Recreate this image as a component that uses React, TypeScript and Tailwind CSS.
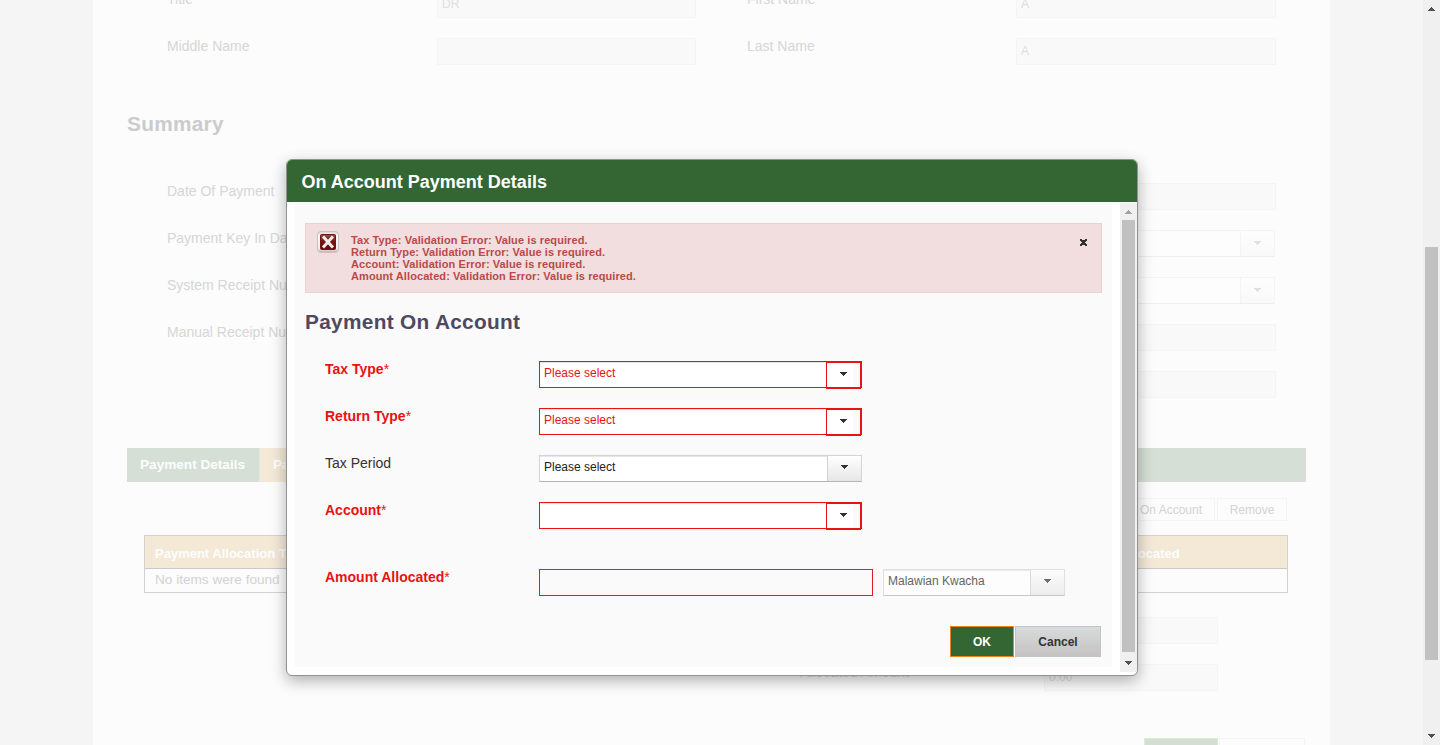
import type { ReactNode } from "react";

const FONT = "font-['Liberation_Sans',Arial,sans-serif]";

function Arrow({ className = "", up = false }: { className?: string; up?: boolean }) {
  return (
    <svg width="7" height="4" viewBox="0 0 7 4" shapeRendering="crispEdges" className={className} fill="currentColor">
      {up ? <path d="M3 0h1v1h1v1h1v1h1v1H0V3h1V2h1V1h1z" /> : <path d="M0 0h7v1H6v1H5v1H4v1H3V3H2V2H1V1H0z" />}
    </svg>
  );
}

function FadedLabel({ children, className = "" }: { children?: ReactNode; className?: string }) {
  return <div className={`text-[14px] leading-4 text-[#d6d6d6] whitespace-nowrap ${className}`}>{children}</div>;
}

function FadedInput({ children, className = "" }: { children?: ReactNode; className?: string }) {
  return (
    <div className={`h-[27px] shrink-0 border border-[#f4f4f4] bg-[#f9f9f9] px-1 text-[12px] leading-[25px] text-[#dedede] ${className}`}>
      {children}
    </div>
  );
}

function FadedSelect() {
  return (
    <div className="flex h-[27px] w-[259px] shrink-0 border border-b-[#eeeeee] border-[#f4f4f4] bg-[#fdfdfd]">
      <div className="flex-1" />
      <div className="w-[34px] border-l border-[#f4f4f4] bg-linear-to-b from-[#fdfdfd] to-[#f9f9f9] pt-[10px] pl-[13px]">
        <Arrow className="block text-[#dfdfdf]" />
      </div>
    </div>
  );
}

function FadedRow({ left, leftField, right, rightField }: { left?: string; leftField?: ReactNode; right?: string; rightField?: ReactNode }) {
  return (
    <div className="mb-5 flex h-[27px] pl-[74px]">
      <FadedLabel className="w-[270px]">{left}</FadedLabel>
      <div className="w-[310px]">{leftField}</div>
      <FadedLabel className="w-[269px]">{right}</FadedLabel>
      {rightField}
    </div>
  );
}

function Background() {
  return (
    <div className="h-full w-[1237px] shrink-0 overflow-hidden bg-[#fcfcfc]">
      <div className="-mt-[9px]">
        <FadedRow
          left="Title"
          leftField={<FadedInput className="w-[259px]">DR</FadedInput>}
          right="First Name"
          rightField={<FadedInput className="w-[260px]">A</FadedInput>}
        />
        <FadedRow
          left="Middle Name"
          leftField={<FadedInput className="w-[259px]" />}
          right="Last Name"
          rightField={<FadedInput className="w-[260px]">A</FadedInput>}
        />
      </div>
      <h2 className="mt-[47px] mb-[47px] pl-[34px] text-[20.8px] leading-6 font-bold tracking-[0.3px] text-[#cbcbcb]">Summary</h2>
      <FadedRow left="Date Of Payment" rightField={<FadedInput className="w-[260px]" />} />
      <FadedRow left="Payment Key In Date" rightField={<FadedSelect />} />
      <FadedRow left="System Receipt Number" rightField={<FadedSelect />} />
      <FadedRow left="Manual Receipt Number" rightField={<FadedInput className="w-[260px]" />} />
      <FadedRow rightField={<FadedInput className="w-[260px]" />} />

      <div className="mt-[50px] ml-[34px] flex h-[34px] w-[1179px] bg-[#d5dfd5] text-[13.6px] leading-[33px] font-bold text-[#fdfdfd]">
        <div className="w-[132px] pl-[13px]">Payment Details</div>
        <div className="w-[140px] border-l border-[#e6e6e6] bg-[#f4e9d7] pl-[13px]">Payments</div>
      </div>

      <div className="mt-4 mr-[43px] flex h-[23px] justify-end gap-[2px] text-[12px] leading-[22px] text-[#d3d3d3]">
        <div className="border border-[#f4f4f4] bg-[#fcfcfc] px-3">On Account</div>
        <div className="w-[70px] border border-[#f4f4f4] bg-[#fcfcfc] text-center">Remove</div>
      </div>

      <div className="mt-[14px] ml-[51px] w-[1144px] border border-[#d2d2d4]">
        <div className="flex h-[33px] border-b border-[#c9c9cc] bg-[#f4e9d7] text-[13px] leading-[35px] font-bold text-[#fdfdfd]">
          <div className="w-[914px] pl-[10px]">Payment Allocation Type</div>
          <div className="pl-[10px]">Amount Allocated</div>
        </div>
        <div className="h-[23px] pl-[10px] text-[13.6px] leading-[22px] text-[#d3d3d3]">No items were found</div>
      </div>

      <div className="mt-6 ml-[707px]">
        <div className="mb-5 flex">
          <FadedLabel className="w-[244px]">Total Amount</FadedLabel>
          <FadedInput className="w-[174px] border-[#f0f0f0]" />
        </div>
        <div className="flex">
          <FadedLabel className="w-[244px]">Allocated Amount</FadedLabel>
          <FadedInput className="w-[174px] border-[#f0f0f0]">0.00</FadedInput>
        </div>
      </div>

      <div className="mt-[47px] mr-[25px] flex justify-end gap-px">
        <div className="h-8 w-[74px] border border-[#d5ecd5] bg-[#d3dfd3]" />
        <div className="h-8 w-[86px] border border-[#f4f4f4]" />
      </div>
    </div>
  );
}

function PageScrollbar() {
  return (
    <div className="flex w-[17px] shrink-0 flex-col items-center bg-[#f0f0f0] text-[#505050]">
      <div className="h-[247px] pt-[7px]">
        <Arrow up className="block" />
      </div>
      <div className="h-[413px] w-[13px] bg-[#c1c1c1]" />
      <div className="pt-[74px]">
        <Arrow className="block" />
      </div>
    </div>
  );
}

function ErrorIcon() {
  return (
    <svg width="24" height="24" viewBox="0 0 24 24">
      <defs>
        <linearGradient id="frame" x1="0" y1="0" x2="0" y2="1">
          <stop offset="0" stopColor="#dcd6d6" />
          <stop offset="0.2" stopColor="#f8f8f8" />
          <stop offset="0.8" stopColor="#f0f0f0" />
          <stop offset="1" stopColor="#b9b3b3" />
        </linearGradient>
        <linearGradient id="core" x1="0" y1="0" x2="0" y2="1">
          <stop offset="0" stopColor="#9b4a4a" />
          <stop offset="0.45" stopColor="#7a1414" />
          <stop offset="1" stopColor="#6a0808" />
        </linearGradient>
      </defs>
      <rect x="1.5" y="1.5" width="21" height="21" rx="3.5" fill="url(#frame)" stroke="#cdbfc0" />
      <rect x="4.5" y="4.5" width="15" height="15" rx="1" fill="url(#core)" stroke="#6b1818" />
      <path d="M8 7.5l8 9M16 7.5l-8 9" stroke="#eeeaea" strokeWidth="3" strokeLinecap="square" />
    </svg>
  );
}

function ErrorPanel() {
  return (
    <div className="flex h-[70px] border border-[#edd1d5] bg-[#f2dede] pt-[6px] pl-[10px]">
      <ErrorIcon />
      <ul className="mt-[4px] ml-[11px] flex-1 text-[11px] leading-3 font-bold tracking-[0.09px] text-[#b94a48]">
        <li>Tax Type: Validation Error: Value is required.</li>
        <li>Return Type: Validation Error: Value is required.</li>
        <li>Account: Validation Error: Value is required.</li>
        <li>Amount Allocated: Validation Error: Value is required.</li>
      </ul>
      <svg width="7" height="7" viewBox="0 0 7 7" className="mt-[9px] mr-[14px]" shapeRendering="crispEdges" fill="#333333">
        <path d="M0 0h2v1h3V0h2v2H6v1H5v1h1v1h1v2H5V6H2v1H0V5h1V4h1V3H1V2H0z" />
      </svg>
    </div>
  );
}

function Field({ label, invalid = false, children, className = "" }: { label: string; invalid?: boolean; children: ReactNode; className?: string }) {
  return (
    <div className={`flex h-[27px] pl-5 ${className}`}>
      <div className={`w-[214px] text-[14px] leading-4 ${invalid ? "font-bold text-[#e81313]" : "text-[#333333]"}`}>
        {label}
        {invalid && <span className="font-normal">*</span>}
      </div>
      {children}
    </div>
  );
}

function InvalidSelect({ children }: { children?: ReactNode }) {
  return (
    <div className="flex h-[27px] w-[323px] border border-[#e81313] bg-white text-[12px] text-[#e81313] shadow-[inset_0_1px_1px_#e4e4e4]">
      <div className="flex-1 pl-1 leading-[23px]">{children}</div>
      <div className="-mb-[2px] h-[27px] w-[35px] border border-b-2 border-[#e81313] bg-linear-to-r from-white from-80% to-[#fafafa] to-80% pt-[9px] pl-[13px]">
        <Arrow className="block text-[#333333]" />
      </div>
    </div>
  );
}

function Select({ children, width, muted = false }: { children: ReactNode; width: string; muted?: boolean }) {
  return (
    <div
      className={`flex h-[27px] border border-[#d4d4d4] border-b-[#b3b3b3] bg-white text-[12px] text-[#222222] shadow-[inset_0_1px_1px_#e4e4e4] ${width} ${muted ? "opacity-70" : ""}`}
    >
      <div className="flex-1 pl-1 leading-[23px]">{children}</div>
      <div className="w-[34px] border-l border-[#d0d0d0] bg-linear-to-b from-white to-[#e6e6e6] pt-[9px] pl-[13px]">
        <Arrow className="block text-[#333333]" />
      </div>
    </div>
  );
}

function Dialog() {
  return (
    <div className="absolute top-[159px] left-[286px] flex h-[517px] w-[852px] flex-col overflow-hidden rounded-[6px] border border-[#929292] bg-white shadow-[0_5px_15px_rgba(0,0,0,0.3)]">
      <div className="h-[42px] shrink-0 bg-[#336633] pl-[14.5px] text-[18px] leading-[44px] font-bold text-white">On Account Payment Details</div>
      <div className="flex h-[470px] pt-px">
        <div className="ml-2 h-[464px] w-[817px] bg-[#fafafa] px-[10px] pt-5">
          <ErrorPanel />
          <h2 className="mt-[17px] mb-[27px] text-[20.8px] leading-6 font-bold tracking-[0.32px] text-[#4f4863]">Payment On Account</h2>
          <Field label="Tax Type" invalid className="mb-5">
            <InvalidSelect>Please select</InvalidSelect>
          </Field>
          <Field label="Return Type" invalid className="mb-5">
            <InvalidSelect>Please select</InvalidSelect>
          </Field>
          <Field label="Tax Period" className="mb-5">
            <Select width="w-[323px]">Please select</Select>
          </Field>
          <Field label="Account" invalid className="mb-10">
            <InvalidSelect />
          </Field>
          <Field label="Amount Allocated" invalid>
            <div className="mr-[10px] h-[27px] w-[334px] border border-[#dd1f1f]" />
            <Select width="w-[182px]" muted>
              Malawian Kwacha
            </Select>
          </Field>
          <div className="mt-[30px] mr-px flex justify-end gap-px text-[12px] leading-[30px] font-bold">
            <div className="h-[31px] w-16 border border-[#f0821e] bg-[#336633] text-center text-white">OK</div>
            <div className="h-[31px] w-[86px] border border-[#bfc4c4] bg-linear-to-b from-[#d8dcdc] to-[#c5c2c2] text-center text-[#333333]">
              Cancel
            </div>
          </div>
        </div>
        <div className="ml-2 flex w-[17px] flex-col items-center bg-[#f0f0f0]">
          <div className="h-[17px] pt-[7px]">
            <Arrow up className="block text-[#a3a3a3]" />
          </div>
          <div className="h-[432px] w-[13px] bg-[#c1c1c1]" />
          <div className="pt-[9px]">
            <Arrow className="block text-[#505050]" />
          </div>
        </div>
      </div>
    </div>
  );
}

export default function App() {
  return (
    <div className={`relative flex h-[745px] w-[1440px] overflow-hidden bg-[#f5f5f5] ${FONT}`}>
      <div className="w-[93px] shrink-0" />
      <Background />
      <div className="w-[93px] shrink-0" />
      <PageScrollbar />
      <Dialog />
    </div>
  );
}
